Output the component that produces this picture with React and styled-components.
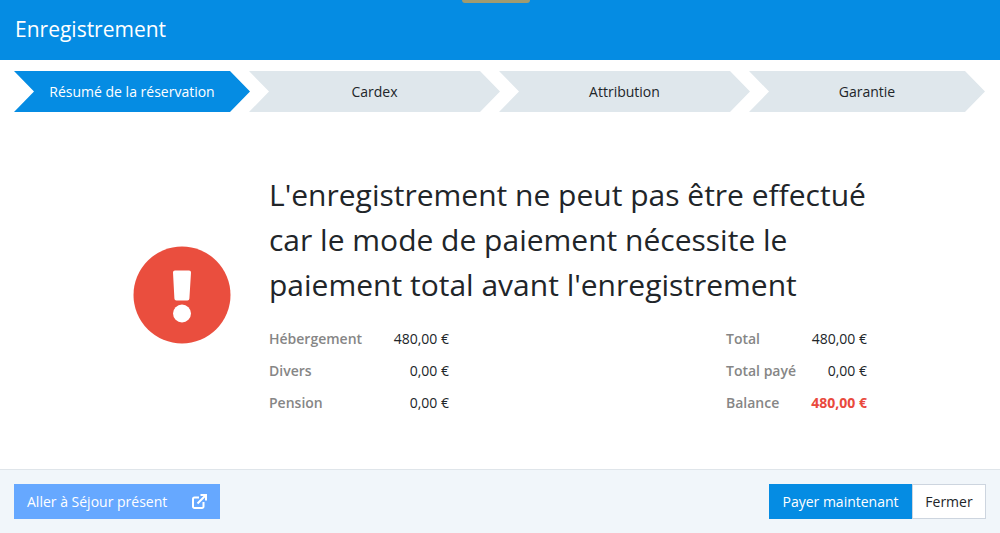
import React from "react";
import styled, { createGlobalStyle } from "styled-components";

const GlobalStyle = createGlobalStyle`
  html, body {
    margin: 0;
    padding: 0;
    height: 100%;
    background: #ffffff;
    font-family: "Open Sans", "Liberation Sans", sans-serif;
    color: #212529;
  }
  * {
    box-sizing: border-box;
  }
`;

const Page = styled.div`
  position: relative;
  width: 1000px;
  height: 533px;
  display: flex;
  flex-direction: column;
  overflow: hidden;
`;

const TopTab = styled.div`
  position: absolute;
  top: 0;
  left: 462px;
  width: 68px;
  height: 3px;
  background: #a09b70;
  border-radius: 0 0 6px 6px;
`;

const Header = styled.header`
  height: 60px;
  flex: none;
  display: flex;
  align-items: center;
  padding: 0 0 2px 15px;
  background: #058ce3;
  color: #ffffff;
  font-size: 21px;
`;

const Steps = styled.nav`
  display: flex;
  flex: none;
  height: 41px;
  margin: 11px 0 0 14px;
`;

const Step = styled.div`
  flex: none;
  width: ${(props) => props.$width}px;
  margin-left: ${(props) => (props.$first ? 0 : -1)}px;
  display: flex;
  align-items: center;
  justify-content: center;
  padding-bottom: 1px;
  font-size: 14px;
  color: ${(props) => (props.$active ? "#ffffff" : "#212529")};
  background: ${(props) => (props.$active ? "#058ce3" : "#dfe7ec")};
  clip-path: polygon(
    0 0,
    calc(100% - 20px) 0,
    100% 50%,
    calc(100% - 20px) 100%,
    0 100%,
    20px 50%
  );
`;

const Main = styled.main`
  flex: 1;
  display: flex;
  align-items: center;
  gap: 38px;
  padding: 8px 0 0 133px;
`;

const AlertIcon = styled.svg`
  flex: none;
  width: 98px;
  height: 98px;
`;

const Content = styled.section`
  width: 598px;
  padding-top: 1px;
`;

const Title = styled.h1`
  margin: 0 0 16px;
  font-size: 30px;
  font-weight: 400;
  line-height: 45px;
  color: #212529;
  white-space: nowrap;
`;

const Summary = styled.div`
  display: flex;
  justify-content: space-between;
`;

const Table = styled.div`
  width: ${(props) => props.$width}px;
`;

const Row = styled.div`
  display: flex;
  justify-content: space-between;
  height: 32px;
  align-items: center;
  font-size: 14px;
`;

const Label = styled.span`
  font-weight: 600;
  color: #868686;
`;

const Value = styled.span`
  font-weight: ${(props) => (props.$danger ? 700 : 400)};
  color: ${(props) => (props.$danger ? "#e9493d" : "#212529")};
`;

const Footer = styled.footer`
  flex: none;
  height: 64px;
  display: flex;
  justify-content: space-between;
  align-items: center;
  padding: 0 14px;
  background: #f1f6fa;
  border-top: 1px solid #dfe5ea;
`;

const Button = styled.button`
  height: 35px;
  border: 0;
  padding: 0;
  font-family: inherit;
  font-size: 14px;
  cursor: pointer;
`;

const LinkButton = styled(Button)`
  width: 206px;
  display: flex;
  align-items: center;
  justify-content: space-between;
  padding: 0 13px 0 13px;
  background: #66a8ff;
  color: #ffffff;
`;

const LinkIcon = styled.svg`
  width: 15px;
  height: 15px;
  fill: none;
  stroke: currentColor;
  stroke-width: 2;
`;

const Actions = styled.div`
  display: flex;
`;

const PayButton = styled(Button)`
  width: 143px;
  background: #058ce3;
  color: #ffffff;
`;

const CloseButton = styled(Button)`
  width: 74px;
  background: #ffffff;
  color: #212529;
  border: 1px solid #cdd5df;
`;

const left = [
  ["Hébergement", "480,00 €"],
  ["Divers", "0,00 €"],
  ["Pension", "0,00 €"],
];

const right = [
  ["Total", "480,00 €"],
  ["Total payé", "0,00 €"],
  ["Balance", "480,00 €", true],
];

const steps = [
  { name: "Résumé de la réservation", width: 236, active: true },
  { name: "Cardex", width: 251 },
  { name: "Attribution", width: 251 },
  { name: "Garantie", width: 236 },
];

function App() {
  return (
    <Page>
      <GlobalStyle />
      <TopTab />
      <Header>Enregistrement</Header>
      <Steps>
        {steps.map((step, i) => (
          <Step key={step.name} $width={step.width} $active={step.active} $first={i === 0}>
            {step.name}
          </Step>
        ))}
      </Steps>
      <Main>
        <AlertIcon viewBox="0 0 98 98">
          <circle cx="49" cy="49" r="48.5" fill="#ea4e3e" />
          <path
            d="M42 24.5h14a2 2 0 0 1 2 2.1l-1.600 26a2 2 0 0 1-2 1.900h-11a2 2 0 0 1-2-1.900l-1.400-26a2 2 0 0 1 2-2.100z"
            fill="#ffffff"
          />
          <circle cx="49" cy="67.500" r="9" fill="#ffffff" />
        </AlertIcon>
        <Content>
          <Title>
            L'enregistrement ne peut pas être effectué
            <br />
            car le mode de paiement nécessite le
            <br />
            paiement total avant l'enregistrement
          </Title>
          <Summary>
            <Table $width={180}>
              {left.map(([label, value]) => (
                <Row key={label}>
                  <Label>{label}</Label>
                  <Value>{value}</Value>
                </Row>
              ))}
            </Table>
            <Table $width={141}>
              {right.map(([label, value, danger]) => (
                <Row key={label}>
                  <Label>{label}</Label>
                  <Value $danger={danger}>{value}</Value>
                </Row>
              ))}
            </Table>
          </Summary>
        </Content>
      </Main>
      <Footer>
        <LinkButton>
          Aller à Séjour présent
          <LinkIcon viewBox="0 0 15 15">
            <path d="M7 3.500H2.500a1.500 1.500 0 0 0-1.500 1.500v7.500a1.500 1.500 0 0 0 1.500 1.500H10a1.500 1.500 0 0 0 1.500-1.500V8" />
            <path d="M5.500 9.500L13.500 1.500M8.500 1h5.500v5.500" />
          </LinkIcon>
        </LinkButton>
        <Actions>
          <PayButton>Payer maintenant</PayButton>
          <CloseButton>Fermer</CloseButton>
        </Actions>
      </Footer>
    </Page>
  );
}

export default App;
